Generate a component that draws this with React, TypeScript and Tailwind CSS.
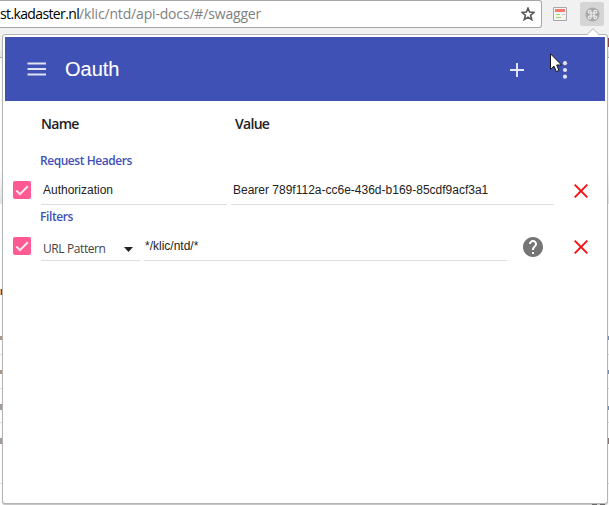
import React from "react";

const sans = "font-['Open_Sans','Noto_Sans',sans-serif]";
const arial = "font-['Liberation_Sans',Arial,sans-serif]";

function Check() {
  return (
    <div className="flex h-[18px] w-[18px] shrink-0 items-center justify-center rounded-[2px] bg-[#ff5a92]">
      <svg width="18" height="18" viewBox="0 0 18 18" fill="none">
        <path d="M3.3 9.5 7 13.2 14.8 5.2" stroke="#fbe9f0" strokeWidth="2" />
      </svg>
    </div>
  );
}

function Delete() {
  return (
    <svg width="14" height="14" viewBox="0 0 14 14" className="shrink-0">
      <path d="M.7.7 13.3 13.3M13.3.7.7 13.3" stroke="#f80d12" strokeWidth="1.9" />
    </svg>
  );
}

function BrowserBar() {
  return (
    <div className="flex h-[51px] items-start bg-[#f1f1f1]">
      <div className="flex h-7 w-[542px] items-center rounded-r-[3px] border-y border-r border-[#a6a6a6] bg-white">
        <div className={`${sans} w-[521px] whitespace-nowrap text-[14px] leading-5 text-[#808080]`}>
          <span className="tracking-[-0.63px] text-black">st.kadaster.nl</span>
          <span className="tracking-[-0.17px]">/klic/ntd/api-docs/#/swagger</span>
        </div>
        <svg width="14" height="14" viewBox="0 0 14 14" className="shrink-0">
          <path d="M7 1.2 8.6 5.1 12.9 5.5 9.6 8.3 10.7 12.6 7 10.2 3.3 12.6 4.4 8.3 1.1 5.5 5.4 5.1Z" fill="none" stroke="#555" strokeWidth="1.6" />
        </svg>
      </div>
      <svg width="14" height="14" viewBox="0 0 14 14" className="ml-[11px] mt-[7px] shrink-0">
        <path d="M.5.5h13v13H.5z" fill="#f5f3f5" stroke="#aaa6aa" />
        <path d="M2 2h10v3H2z" fill="#f57b72" />
        <path d="M3 7h4v1H3zM3 10h5v1H3z" fill="#9bdc62" />
        <path d="M9 7h3v1H9z" fill="#ccc" />
      </svg>
      <div className="ml-[13px] mt-[2px] flex h-6 w-6 items-center justify-center rounded-[2px] bg-[#d5d5d5]">
        <svg width="15" height="15" viewBox="0 0 15 15">
          <circle cx="7.5" cy="7.5" r="7" fill="#a9a9a9" />
          <path d="M6 6H4.7A1.35 1.35 0 1 1 6 4.7v5.6A1.35 1.35 0 1 1 4.7 9h5.6A1.35 1.35 0 1 1 9 10.3V4.7A1.35 1.35 0 1 1 10.3 6Z" fill="none" stroke="#f4f4f4" strokeWidth="1.1" />
        </svg>
      </div>
    </div>
  );
}

/* The web page behind the extension popup, of which only the margins show. */
function PageBehind() {
  return (
    <div className="flex flex-col">
      <div className="h-[7px] border-b border-[#aaa] bg-[#e8e8e8]" />
      <div className="mt-[112px] h-[34px] bg-linear-to-b from-white to-[#e4e4e4]" />
      <div className="mt-[85px] flex h-5 w-[609px] items-start">
        <i className="h-[6px] w-px bg-[#eeb078]" />
        <i className="h-[6px] w-px bg-[#35506f]" />
      </div>
      <div className="flex h-[46px] items-end justify-between border-b border-[#ddd] pb-[14px]">
        <i className="h-1 w-[2px] bg-[#ab9a8c]" />
        <i className="h-1 w-px bg-[#7893b5]" />
      </div>
      <div className="flex h-[34px] items-end justify-between border-b border-[#ddd] pb-[14px]">
        <i className="h-1 w-[2px] bg-[#ab9a8c]" />
        <i className="h-1 w-px bg-[#7893b5]" />
      </div>
      <div className="flex h-[34px] items-end justify-between border-b border-[#ddd] pb-[12px]">
        <i className="h-[6px] w-[2px] bg-[#a89a94]" />
        <i className="h-1 w-px bg-[#7893b5]" />
      </div>
      <div className="flex h-[61px] items-start justify-between border-b border-[#ddd] pt-[15px]">
        <i className="h-[6px] w-[2px] bg-[#a89a94]" />
        <i className="h-[6px] w-px bg-[#8b7978]" />
      </div>
      <div className="flex h-[21px] items-end justify-end gap-[3px] pr-1">
        <i className="h-px w-[5px] bg-[#888]" />
        <i className="h-px w-[5px] bg-[#888]" />
      </div>
    </div>
  );
}

export default function App() {
  return (
    <div className="relative h-[505px] w-[609px] overflow-hidden bg-white">
      <BrowserBar />
      <PageBehind />
      <div className="absolute left-[2px] top-[34px] flex h-[470px] w-[606px] flex-col rounded-[3px] border border-[#b4b4b4] bg-white px-[2px] pt-[2px] shadow-[0_1px_1px_rgba(0,0,0,.25)]">
        <header className="flex h-16 w-[600px] shrink-0 items-center bg-[#3f51b5] text-white">
          <svg width="19" height="14" viewBox="0 0 19 14" className="ml-[22px]">
            <path d="M.5 1.5h18.5M.5 7h18.5M.5 12.5h18.5" stroke="#dfe2f3" strokeWidth="1.8" />
          </svg>
          <h1 className={`${arial} ml-[19px] w-[385px] text-[20px] leading-7 [-webkit-text-stroke:0.1px_white]`}>Oauth</h1>
          <svg width="14" height="14" viewBox="0 0 14 14" className="ml-[60px] mt-[2px]">
            <path d="M7 0v14M0 7h14" stroke="#e6e9f7" strokeWidth="1.9" />
          </svg>
          <svg width="6" height="18" viewBox="0 0 6 18" className="ml-[38px] mt-[2px]" fill="#dfe2f3">
            <circle cx="3" cy="2.2" r="2.1" /><circle cx="3" cy="9" r="2.1" /><circle cx="3" cy="15.7" r="2.1" />
          </svg>
        </header>
        <main className="flex flex-col text-[#222]">
          <div className={`${sans} flex h-12 items-center pb-1 pl-9 text-[14px] font-semibold tracking-[-0.7px]`}>
            <span className="w-[194px]">Name</span>
            <span>Value</span>
          </div>
          <div className={`${sans} h-6 pl-[35px] text-[12px] font-semibold leading-6 tracking-[-0.45px] text-[#3f51b5]`}>Request Headers</div>
          <div className={`${arial} flex h-8 items-start pl-2 pt-2 text-[12px]`}>
            <Check />
            <div className="ml-[10px] h-6 w-[186px] border-b border-[#dedede] pl-[2px] leading-[18px]">Authorization</div>
            <div className="ml-1 h-6 w-[323px] border-b border-[#dedede] pl-[2px] leading-[18px]">Bearer 789f112a-cc6e-436d-b169-85cdf9acf3a1</div>
            <div className="ml-5 mt-[3px]"><Delete /></div>
          </div>
          <div className={`${sans} h-6 pl-[35px] text-[12px] font-semibold leading-6 tracking-[-0.4px] text-[#3f51b5]`}>Filters</div>
          <div className="flex h-8 items-start pl-2 pt-2 text-[12px]">
            <Check />
            <div className={`${sans} ml-[10px] flex h-6 w-[99px] border-b border-[#dedede] pl-[2px] text-[#444]`}>
              <span className="w-[81px] leading-6 tracking-[-0.4px]">URL Pattern</span>
              <svg width="9" height="5" viewBox="0 0 9 5" className="mt-[10px] shrink-0"><path d="M0 0h9L4.5 5Z" fill="#222" /></svg>
            </div>
            <div className={`${arial} ml-1 h-6 w-[363px] border-b border-[#dedede] pl-[1px] leading-[18px]`}>*/klic/ntd/*</div>
            <svg width="20" height="20" viewBox="2 2 20 20" className="ml-4 shrink-0" fill="#757575">
              <path d="M12 2C6.48 2 2 6.48 2 12s4.48 10 10 10 10-4.48 10-10S17.52 2 12 2zm1 17h-2v-2h2v2zm2.07-7.75l-.9.92C13.45 12.9 13 13.5 13 15h-2v-.5c0-1.1.45-2.1 1.17-2.83l1.24-1.26c.37-.36.59-.86.59-1.41 0-1.1-.9-2-2-2s-2 .9-2 2H8c0-2.21 1.79-4 4-4s4 1.79 4 4c0 .88-.36 1.68-.93 2.25z" />
            </svg>
            <div className="ml-[31px] mt-[3px]"><Delete /></div>
          </div>
        </main>
      </div>
      <svg className="absolute left-[587px] top-7" width="12" height="8" viewBox="0 0 12 8">
        <path d="M0 7 6 1l6 6v1H0Z" fill="white" /><path d="M0 6.5 6 .7l6 5.8" fill="none" stroke="#b4b4b4" />
      </svg>
      <i className="absolute left-[608px] top-[38px] h-[9px] w-px bg-[#8d4148]" />
      <svg className="absolute left-[550px] top-[53px]" width="12" height="20" viewBox="0 0 12 20">
        <path d="M.5.8v15.5l3.5-3.2L6.3 18.6l2.6-1.1L6.7 12h4.8Z" fill="white" stroke="#151515" strokeWidth="1" />
      </svg>
    </div>
  );
}
